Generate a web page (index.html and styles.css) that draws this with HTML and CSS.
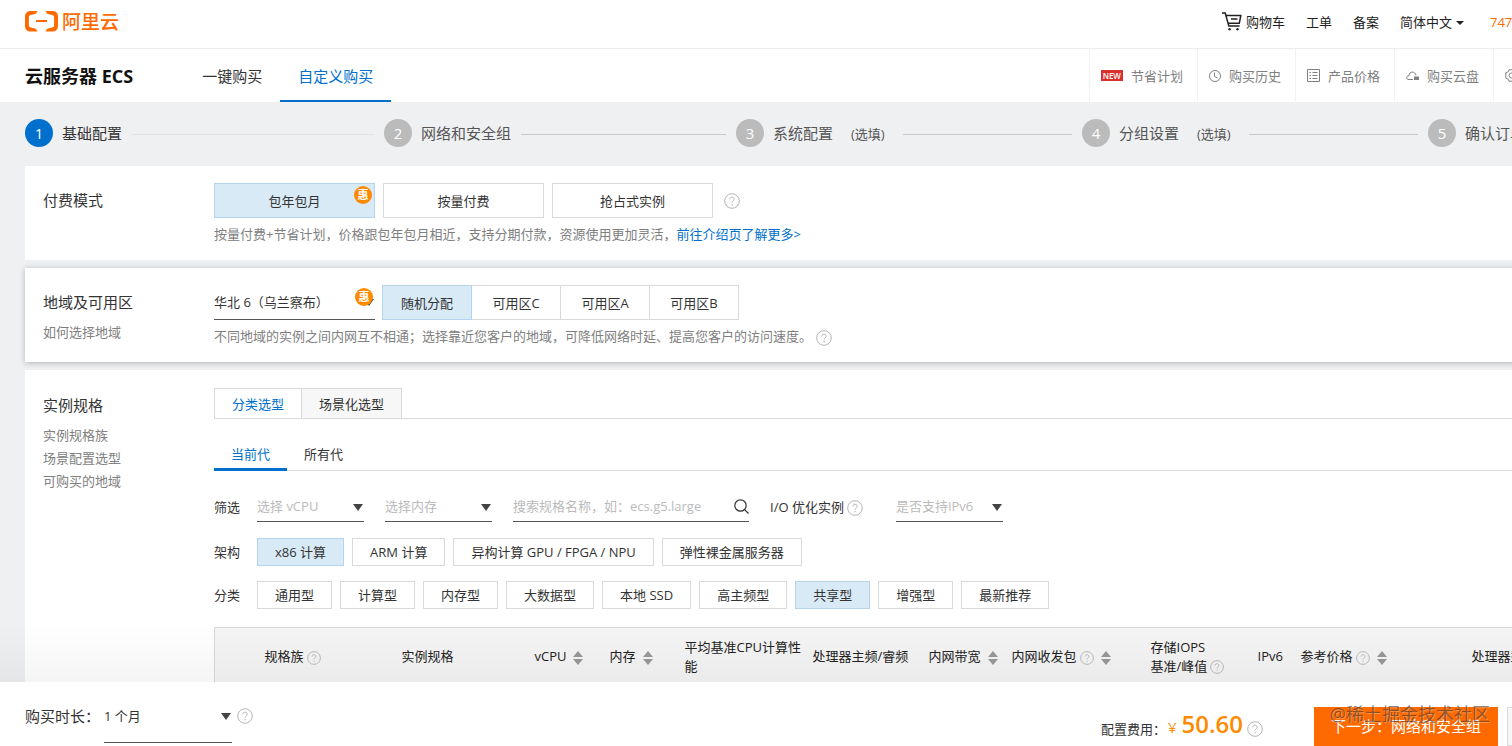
FILE: index.html
```html
<!DOCTYPE html>
<html lang="zh-CN">
<head>
    <meta charset="UTF-8">
    <meta name="viewport" content="width=device-width, initial-scale=1.0">
    <title>云服务器 ECS</title>
    <link rel="stylesheet" href="styles.css">
</head>
<body>
    <!-- Iconos compartidos -->
    <svg class="sprite" aria-hidden="true">
        <symbol id="help" viewBox="0 0 16 16">
            <circle cx="8" cy="8" r="7.3" fill="none" stroke="currentColor"/>
            <path d="M5.8 6.4c0-1.4 1-2.2 2.2-2.2s2.2.8 2.2 2c0 1.6-2.1 1.7-2.1 3.5" fill="none" stroke="currentColor"/>
            <circle cx="8.1" cy="11.7" r=".7" fill="currentColor"/>
        </symbol>
        <symbol id="sort" viewBox="0 0 10 14">
            <path d="M5 0l5 6H0zM5 14l5-6H0z" fill="currentColor"/>
        </symbol>
    </svg>

    <div class="page">
        <header>
            <div class="topbar">
                <a href="#" class="logo">
                    <svg width="33" height="21" viewBox="0 0 33 21" fill="currentColor" aria-hidden="true">
                        <path d="M12.500 0H6C2 0 0 2 0 6v8.500c0 4 2 6 6 6h6.500l-1.600-2.700L6 16.600c-1.500-.4-2.100-1-2.100-2.500V6.400C3.900 4.900 4.500 4.300 6 3.900l4.900-1.200z"/>
                        <path d="M20.500 0H27c4 0 6 2 6 6v8.500c0 4-2 6-6 6h-6.500l1.600-2.700 4.900-1.200c1.500-.4 2.100-1 2.100-2.500V6.400c0-1.500-.6-2.100-2.100-2.500l-4.900-1.200z"/>
                        <path d="M11 9h11v2H11z"/>
                    </svg>
                    阿里云
                </a>
                <ul class="top-links">
                    <li>
                        <a href="#" class="cart-link">
                            <svg width="20" height="19" viewBox="0 0 20 19" fill="none" stroke="currentColor" stroke-width="1.500" aria-hidden="true">
                                <path d="M0 1h3.200l3.600 13h10.800M4 3.500h14.800l-1.500 7.800H6.200M9 7h6.500"/>
                                <circle cx="7.500" cy="17.300" r="1.200" fill="currentColor" stroke="none"/>
                                <circle cx="15.500" cy="17.300" r="1.200" fill="currentColor" stroke="none"/>
                            </svg>
                            购物车
                        </a>
                    </li>
                    <li><a href="#">工单</a></li>
                    <li><a href="#">备案</a></li>
                    <li><a href="#" class="lang-link">简体中文</a></li>
                    <li class="account"><a href="#">7479</a></li>
                </ul>
            </div>
            <div class="product-bar">
                <h1>云服务器 ECS</h1>
                <nav class="buy-tabs">
                    <a href="#">一键购买</a>
                    <a href="#" class="active">自定义购买</a>
                </nav>
                <nav class="tools">
                    <a href="#"><span class="new">NEW</span>节省计划</a>
                    <a href="#">
                        <svg width="12" height="12" viewBox="0 0 12 12" fill="none" stroke="currentColor" aria-hidden="true"><circle cx="6" cy="6" r="5.500"/><path d="M5.500 2.500v4l3 1.500"/></svg>
                        购买历史
                    </a>
                    <a href="#">
                        <svg width="13" height="13" viewBox="0 0 13 13" fill="none" stroke="currentColor" aria-hidden="true"><path d="M.5.5h12v12H.5zM2.500 3.500H4M5.500 3.500h5M2.500 6.500H4M5.500 6.500h5M2.500 9.500H4M5.500 9.500h5"/></svg>
                        产品价格
                    </a>
                    <a href="#">
                        <svg width="13" height="10" viewBox="0 0 13 10" fill="none" stroke="currentColor" aria-hidden="true"><path d="M7 8.500H3C-.2 8.500.1 4.600 3 4.700 3.200-.2 9.500.1 10 4.500"/><path d="M8 5.500h5V9H8z" fill="currentColor" stroke="none"/></svg>
                        购买云盘
                    </a>
                    <a href="#" class="last-tool" aria-label="设置">
                        <svg width="13" height="13" viewBox="0 0 13 13" fill="none" stroke="currentColor" aria-hidden="true"><path d="M4 .8h5l.8 2 2.400 1v5.400l-2.400 1-.8 2H4l-.8-2-2.400-1V3.800l2.400-1z"/><circle cx="6.500" cy="6.500" r="2.500"/></svg>
                    </a>
                </nav>
            </div>
        </header>

        <ol class="steps">
            <li class="active"><span class="num">1</span>基础配置</li>
            <li><span class="num">2</span>网络和安全组</li>
            <li><span class="num">3</span>系统配置<small>(选填)</small></li>
            <li><span class="num">4</span>分组设置<small>(选填)</small></li>
            <li><span class="num">5</span>确认订单</li>
        </ol>

        <main>
            <section class="card">
                <div class="card-label"><h2>付费模式</h2></div>
                <div class="card-body">
                    <div class="pay-options">
                        <button class="option selected">包年包月<span class="badge">惠</span></button>
                        <button class="option">按量付费</button>
                        <button class="option">抢占式实例</button>
                        <svg class="help"><use href="#help"/></svg>
                    </div>
                    <p class="hint">按量付费+节省计划，价格跟包年包月相近，支持分期付款，资源使用更加灵活，<a href="#">前往介绍页了解更多&gt;</a></p>
                </div>
            </section>

            <section class="card raised">
                <div class="card-label">
                    <h2>地域及可用区</h2>
                    <a href="#">如何选择地域</a>
                </div>
                <div class="card-body">
                    <div class="zone-options">
                        <div class="select region">
                            <select aria-label="地域"><option>华北 6（乌兰察布）</option></select>
                            <span class="badge">惠</span>
                        </div>
                        <div class="zones">
                            <button class="selected">随机分配</button>
                            <button>可用区C</button>
                            <button>可用区A</button>
                            <button>可用区B</button>
                        </div>
                    </div>
                    <p class="hint">不同地域的实例之间内网互不相通；选择靠近您客户的地域，可降低网络时延、提高您客户的访问速度。<svg class="help"><use href="#help"/></svg></p>
                </div>
            </section>

            <section class="card spec">
                <div class="card-label">
                    <h2>实例规格</h2>
                    <a href="#">实例规格族</a>
                    <a href="#">场景配置选型</a>
                    <a href="#">可购买的地域</a>
                </div>
                <div class="card-body">
                    <div class="mode-tabs">
                        <button class="active">分类选型</button>
                        <button>场景化选型</button>
                    </div>
                    <div class="gen-tabs">
                        <button class="active">当前代</button>
                        <button>所有代</button>
                    </div>

                    <div class="filters">
                        <span class="row-label">筛选</span>
                        <div class="select empty">
                            <select aria-label="vCPU"><option>选择 vCPU</option></select>
                        </div>
                        <div class="select empty">
                            <select aria-label="内存"><option>选择内存</option></select>
                        </div>
                        <div class="search">
                            <input type="text" aria-label="搜索规格名称" placeholder="搜索规格名称，如：ecs.g5.large">
                            <svg width="15" height="15" viewBox="0 0 15 15" fill="none" stroke="currentColor" stroke-width="1.200" aria-hidden="true"><circle cx="6.500" cy="6.500" r="5.700"/><path d="M10.600 10.600l3.900 3.900"/></svg>
                        </div>
                        <span class="io">I/O 优化实例<svg class="help"><use href="#help"/></svg></span>
                        <div class="select empty ipv6">
                            <select aria-label="IPv6"><option>是否支持IPv6</option></select>
                        </div>
                    </div>

                    <div class="tags">
                        <span class="row-label">架构</span>
                        <button class="selected">x86 计算</button>
                        <button>ARM 计算</button>
                        <button>异构计算 GPU / FPGA / NPU</button>
                        <button>弹性裸金属服务器</button>
                    </div>
                    <div class="tags">
                        <span class="row-label">分类</span>
                        <button>通用型</button>
                        <button>计算型</button>
                        <button>内存型</button>
                        <button>大数据型</button>
                        <button>本地 SSD</button>
                        <button>高主频型</button>
                        <button class="selected">共享型</button>
                        <button>增强型</button>
                        <button>最新推荐</button>
                    </div>

                    <table>
                        <thead>
                            <tr>
                                <th class="c-check"></th>
                                <th class="c-family">规格族<svg class="help"><use href="#help"/></svg></th>
                                <th class="c-type">实例规格</th>
                                <th class="c-small">vCPU<svg class="sort"><use href="#sort"/></svg></th>
                                <th class="c-small">内存<svg class="sort"><use href="#sort"/></svg></th>
                                <th class="c-base">平均基准CPU计算性能</th>
                                <th class="c-freq">处理器主频/睿频</th>
                                <th class="c-band">内网带宽<svg class="sort"><use href="#sort"/></svg></th>
                                <th class="c-pps">内网收发包<svg class="help"><use href="#help"/></svg><svg class="sort"><use href="#sort"/></svg></th>
                                <th class="c-iops">存储IOPS<br>基准/峰值<svg class="help"><use href="#help"/></svg></th>
                                <th class="c-ipv6">IPv6</th>
                                <th class="c-price">参考价格<svg class="help"><use href="#help"/></svg><svg class="sort"><use href="#sort"/></svg></th>
                                <th>处理器型号</th>
                            </tr>
                        </thead>
                    </table>
                </div>
            </section>
        </main>
    </div>

    <footer>
        <div class="duration">
            <label for="duration">购买时长：</label>
            <div class="select">
                <select id="duration"><option>1 个月</option></select>
            </div>
            <svg class="help"><use href="#help"/></svg>
        </div>
        <div class="order">
            <span class="cost">配置费用：</span>
            <span class="yen">¥</span>
            <strong>50.60</strong>
            <svg class="help"><use href="#help"/></svg>
            <button class="next">下一步：网络和安全组</button>
            <button class="confirm" aria-label="确认订单"></button>
        </div>
        <span class="watermark">@稀土掘金技术社区</span>
    </footer>
</body>
</html>
```

FILE: styles.css
```css
/* Estilos generales */
* {
    box-sizing: border-box;
}

body {
    margin: 0;
    height: 100vh;
    overflow: hidden;
    background-color: #eff0f2;
    color: #333;
    font-family: "Open Sans", "Noto Sans CJK SC", sans-serif;
    font-size: 13px;
    line-height: 20px;
}

button,
input,
select {
    font: inherit;
    color: inherit;
}

button {
    padding: 0;
    border: 1px solid #d9d9d9;
    background-color: #fff;
    cursor: pointer;
    white-space: nowrap;
}

a {
    color: inherit;
    text-decoration: none;
}

h1,
h2,
p,
ul,
ol {
    margin: 0;
    padding: 0;
    list-style: none;
}

.page {
    min-width: 1600px;
}

.sprite {
    position: absolute;
    width: 0;
    height: 0;
}

.help {
    flex: none;
    width: 16px;
    height: 16px;
    color: #b5b5b5;
    vertical-align: middle;
}

.sort {
    width: 10px;
    height: 14px;
    margin-left: 7px;
    color: #999;
    vertical-align: middle;
}

.selected {
    border-color: #b3d4ec;
    background-color: #d9eaf7;
}

.badge {
    position: absolute;
    top: 2px;
    right: 2px;
    width: 18px;
    height: 18px;
    border-radius: 50%;
    background-color: #ff8a00;
    color: #fff;
    font-size: 11px;
    font-weight: 700;
    line-height: 17px;
    text-align: center;
}

/* Cabecera */
header {
    background-color: #fff;
}

.topbar {
    display: flex;
    align-items: center;
    justify-content: space-between;
    height: 49px;
    padding: 0 0 5px 25px;
    border-bottom: 1px solid #ebecec;
}

.logo {
    display: flex;
    align-items: center;
    gap: 4px;
    color: #ff6a00;
    font-size: 19px;
    font-weight: 500;
}

.top-links {
    display: flex;
    gap: 21px;
    color: #222;
}

.cart-link,
.lang-link {
    display: flex;
    align-items: center;
    gap: 4px;
}

.lang-link::after {
    content: "";
    margin: 2px 5px 0 0;
    border: 4px solid transparent;
    border-top-color: #222;
    border-bottom: 0;
}

.account {
    width: 110px;
    color: #ff6a00;
}

.product-bar {
    display: flex;
    height: 53px;
    padding-left: 25px;
    line-height: 54px;
}

.product-bar h1 {
    color: #111;
    font-size: 18px;
    font-weight: 700;
}

.buy-tabs {
    display: flex;
    margin-left: 51px;
    font-size: 15px;
}

.buy-tabs a {
    padding: 0 18px;
}

.buy-tabs .active {
    border-bottom: 2px solid #0070cc;
    color: #0070cc;
}

.tools {
    display: flex;
    margin-left: auto;
    color: #808080;
}

.tools a {
    display: flex;
    align-items: center;
    gap: 8px;
    padding: 0 14px 0 11px;
    border-left: 1px solid #f2f2f2;
}

.tools .last-tool {
    width: 107px;
}

.new {
    padding: 0 2px;
    background-color: #d9302c;
    color: #fff;
    font-size: 8px;
    font-weight: 600;
    line-height: 11px;
}

/* Pasos */
.steps {
    display: grid;
    grid-template-columns: 359fr 352fr 346fr 346fr 172fr;
    padding: 17px 0 19px 25px;
    color: #555;
    font-size: 15px;
    line-height: 28px;
}

.steps li {
    display: flex;
    align-items: center;
    height: 28px;
    white-space: nowrap;
}

.steps li::after {
    content: "";
    flex: 1;
    height: 1px;
    margin: 2px 10px 0;
    background-color: #c8c9cb;
}

.steps .active {
    color: #333;
}

.steps .active::after {
    background-color: #e2e3e5;
}

.steps li:last-child::after {
    display: none;
}

.num {
    width: 28px;
    height: 28px;
    margin-right: 9px;
    border-radius: 50%;
    background-color: #bbb;
    color: #fff;
    text-align: center;
}

.active .num {
    background-color: #0070cc;
}

.steps small {
    margin: 2px 8px 0 18px;
    font-size: 13px;
}

/* Tarjetas */
main {
    display: flex;
    flex-direction: column;
    gap: 8px;
    padding-left: 25px;
}

.card {
    display: flex;
    padding: 17px 0 16px 18px;
    background-color: #fff;
}

.raised {
    box-shadow: 0 1px 6px rgba(0, 0, 0, 0.25);
}

.spec {
    padding-top: 18px;
}

.card-label {
    flex: none;
    width: 171px;
    padding-top: 6px;
    color: #808080;
}

.card-label h2 {
    margin-bottom: 7px;
    color: #333;
    font-size: 15px;
    font-weight: 400;
    line-height: 23px;
}

.card-label a {
    display: block;
    line-height: 23px;
}

.card-body {
    flex: 1;
}

.pay-options,
.zone-options {
    display: flex;
    align-items: center;
    gap: 8px;
}

.option {
    position: relative;
    width: 161px;
    height: 35px;
}

.pay-options .help {
    margin-left: 3px;
}

.hint {
    margin-top: 6px;
    color: #808080;
}

.hint a {
    color: #0070cc;
}

.hint .help {
    margin-left: 4px;
}

.zones {
    display: flex;
}

.zones button {
    width: 90px;
    height: 35px;
    margin-left: -1px;
}

.zones .selected {
    position: relative;
}

/* Listas desplegables */
.select {
    position: relative;
    width: 107px;
    border-bottom: 1px solid #555;
}

.select::after {
    content: "";
    position: absolute;
    top: 13px;
    right: 1px;
    border: 5px solid transparent;
    border-top: 7px solid #444;
    border-bottom: 0;
    pointer-events: none;
}

.select select {
    display: block;
    width: 100%;
    height: 30px;
    padding: 0;
    border: 0;
    appearance: none;
    background-color: transparent;
}

.region {
    width: 161px;
}

.region select {
    height: 33px;
}

.region .badge {
    z-index: 1;
}

.empty select {
    color: #bbb;
}

/* Especificaciones */
.mode-tabs {
    display: flex;
    border-bottom: 1px solid #d9d9d9;
}

.mode-tabs button {
    height: 30px;
    padding: 0 17px;
    border-bottom: 0;
    background-color: #f7f7f7;
}

.mode-tabs button + button {
    border-left: 0;
}

.mode-tabs .active {
    background-color: #fff;
    color: #0070cc;
}

.gen-tabs {
    display: flex;
    margin-top: 20px;
    border-bottom: 1px solid #d9d9d9;
}

.gen-tabs button {
    height: 32px;
    padding: 0 17px;
    border: 0;
    border-bottom: 3px solid transparent;
    margin-bottom: -1px;
    background-color: transparent;
}

.gen-tabs .active {
    border-color: #0070cc;
    color: #0070cc;
}

.filters {
    display: flex;
    align-items: center;
    gap: 21px;
    margin-top: 20px;
}

.row-label {
    width: 26px;
}

.filters .row-label {
    margin-right: -4px;
}

.search {
    display: flex;
    align-items: center;
    width: 236px;
    border-bottom: 1px solid #555;
}

.search input {
    flex: 1;
    min-width: 0;
    height: 30px;
    padding: 0;
    border: 0;
    outline: 0;
}

.search input::placeholder {
    color: #bbb;
    opacity: 1;
}

.io .help {
    margin-left: 3px;
}

.ipv6 {
    margin-left: 12px;
}

.tags {
    display: flex;
    align-items: center;
    gap: 8px;
    margin-top: 15px;
}

.filters + .tags {
    margin-top: 16px;
}

.tags .row-label {
    margin-right: 9px;
}

.tags button {
    height: 28px;
    padding: 0 17px;
}

table {
    width: 100%;
    margin-top: 18px;
    border-collapse: collapse;
    table-layout: fixed;
    border: 1px solid #d9d9d9;
    background-color: #f5f5f5;
}

th {
    height: 58px;
    padding: 0 8px 0 0;
    color: #222;
    font-weight: 400;
    line-height: 19px;
    text-align: left;
}

th .help {
    width: 14px;
    height: 14px;
    margin-left: 3px;
}

.c-check { width: 50px; }
.c-family { width: 137px; }
.c-type { width: 133px; }
.c-small { width: 75px; }
.c-base { width: 128px; }
.c-freq { width: 116px; }
.c-band { width: 83px; padding: 0; }
.c-pps { width: 139px; }
.c-iops { width: 107px; }
.c-ipv6 { width: 43px; }
.c-price { width: 171px; }

/* Barra inferior */
footer {
    position: fixed;
    left: 0;
    bottom: 0;
    display: flex;
    justify-content: space-between;
    width: 100%;
    min-width: 1600px;
    height: 64px;
    padding: 0 14px 0 25px;
    background-color: #fff;
}

footer::before {
    content: "";
    position: absolute;
    left: 0;
    right: 0;
    bottom: 100%;
    height: 60px;
    background: linear-gradient(rgba(0, 0, 0, 0), rgba(0, 0, 0, 0.04));
    pointer-events: none;
}

.duration,
.order {
    display: flex;
    align-items: center;
}

.duration {
    padding-bottom: 3px;
    align-self: flex-end;
}

.duration label {
    width: 79px;
    padding-bottom: 2px;
    font-size: 15px;
    white-space: nowrap;
}

.duration .select {
    width: 128px;
}

.duration select {
    height: 52px;
}

.duration .select::after {
    top: 23px;
}

.duration .help {
    margin: 0 0 2px 5px;
}

.order {
    padding-top: 24px;
}

.cost {
    padding-top: 6px;
}

.yen {
    margin: 2px 5px 0 2px;
    color: #ff8a00;
    font-size: 15px;
}

.order strong {
    padding-bottom: 4px;
    color: #ff8a00;
    font-size: 24px;
    font-weight: 600;
}

.order .help {
    margin: 6px 0 0 4px;
}

.next {
    width: 184px;
    height: 39px;
    margin-left: 51px;
    border: 0;
    background-color: #ff6a00;
    color: #fff;
    font-size: 15px;
}

.confirm {
    width: 79px;
    height: 39px;
    margin-left: 9px;
    background-color: #f7f7f7;
}

.watermark {
    position: absolute;
    right: 110px;
    top: 22px;
    color: rgba(70, 50, 40, 0.6);
    font-size: 18px;
    text-shadow: 1px 1px 0 rgba(255, 255, 255, 0.3);
    white-space: nowrap;
    pointer-events: none;
}
```
